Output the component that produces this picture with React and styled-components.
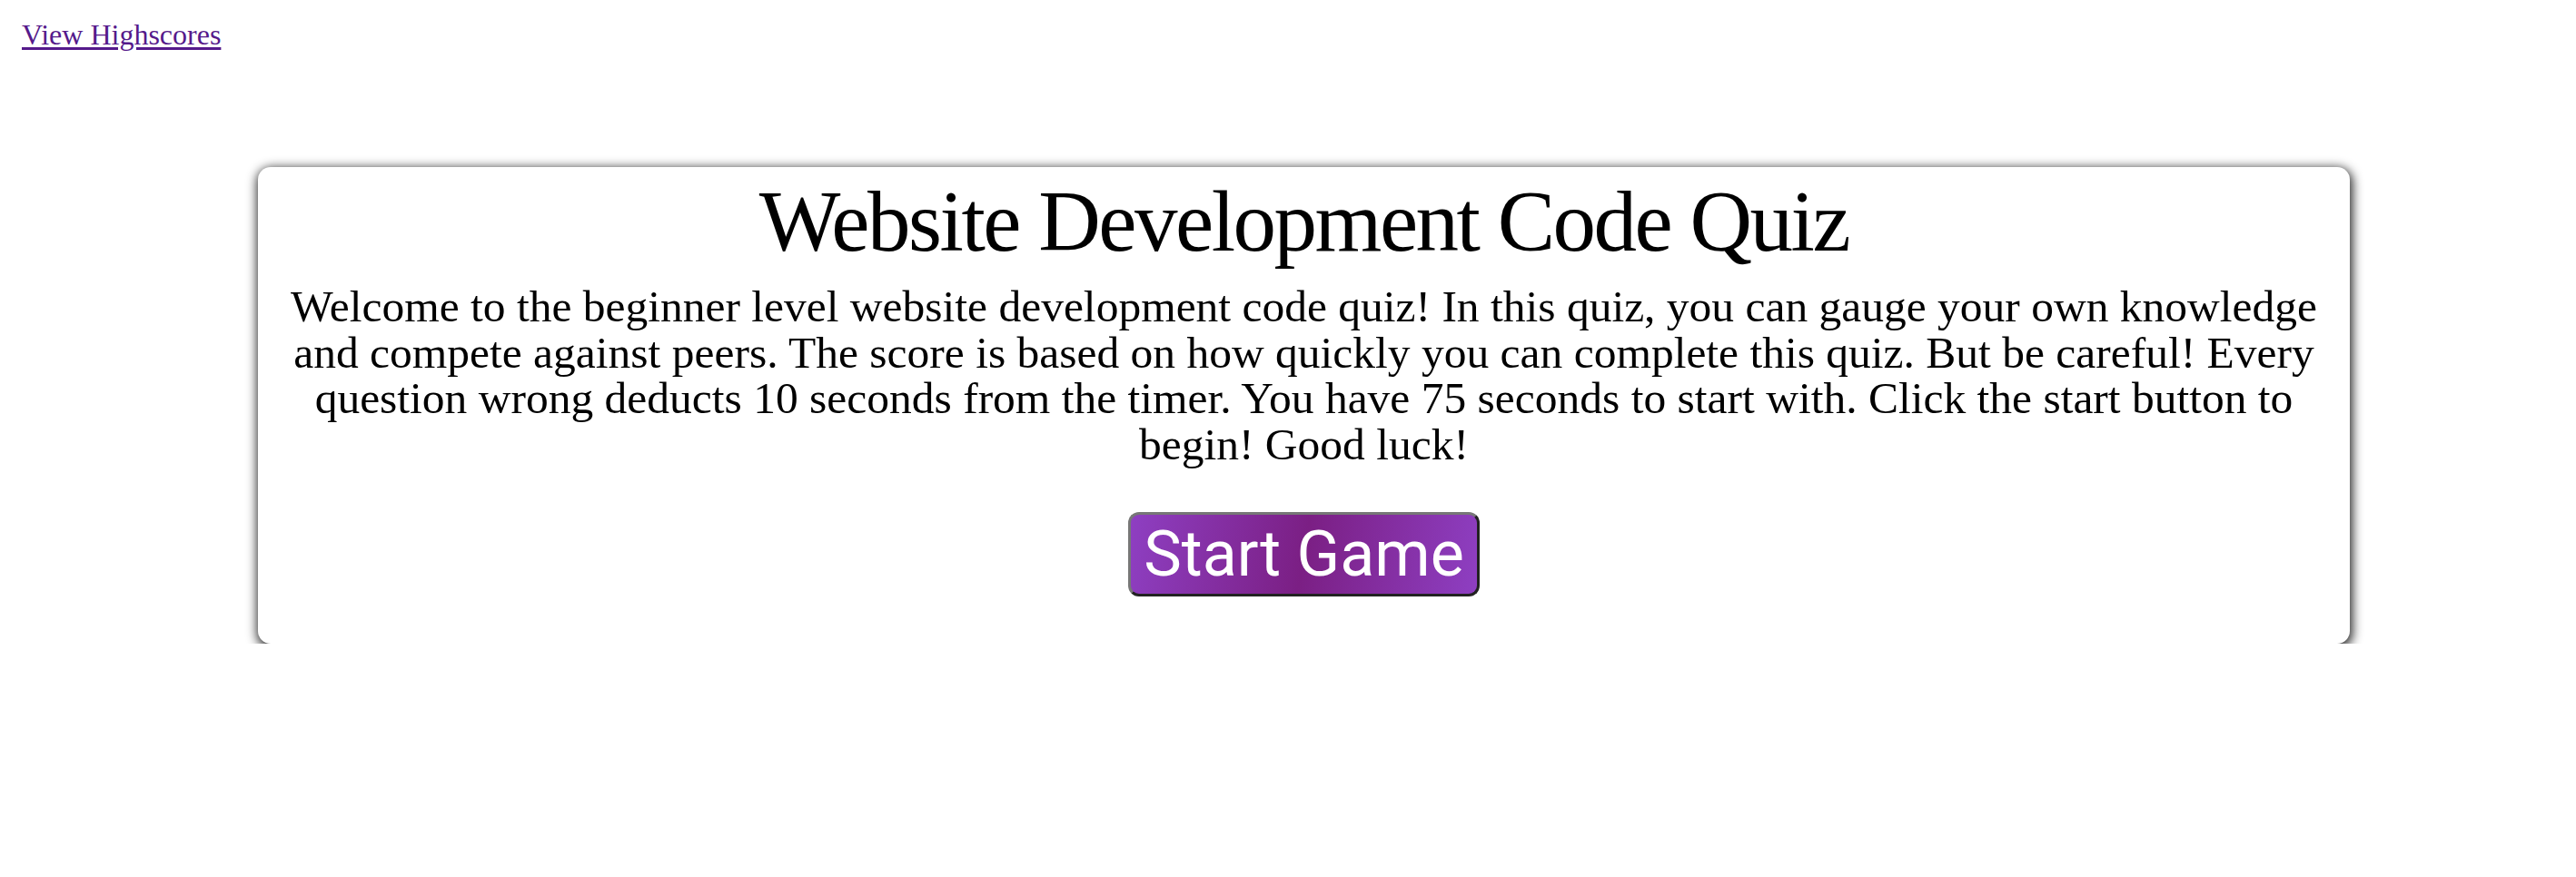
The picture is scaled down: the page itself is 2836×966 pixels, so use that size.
import React from "react";
import styled, { createGlobalStyle } from "styled-components";

const GlobalStyle = createGlobalStyle`
  body {
    margin: 0;
    background: #fff;
    font-family: "Liberation Serif", "Times New Roman", serif;
    color: #000;
  }
`;

const Header = styled.header`
  padding: 20px 0 0 24px;
`;

const HighscoreLink = styled.a`
  font-size: 32px;
  line-height: 36px;
  color: #551a8b;
  text-decoration: underline;
  text-underline-offset: 3px;
  cursor: pointer;
`;

const Card = styled.main`
  margin: 128px 249px 0 284px;
  padding: 7px 16px 52px;
  border-radius: 14px;
  background: #fff;
  box-shadow: 1px 3px 12px 2px rgba(0, 0, 0, 0.85);
  display: flex;
  flex-direction: column;
  align-items: center;
  text-align: center;
`;

const Title = styled.h1`
  margin: 0;
  font-size: 95px;
  font-weight: 400;
  line-height: 106px;
  letter-spacing: -2.5px;
`;

const Intro = styled.p`
  margin: 16px 0 0;
  font-size: 49.5px;
  line-height: 50.6px;
`;

const StartButton = styled.button`
  margin-top: 49px;
  padding: 6px 14px;
  font-family: Roboto, "Noto Sans", sans-serif;
  font-size: 70px;
  line-height: 75px;
  color: #fff;
  border: 3px solid;
  border-color: #777 #222 #222 #777;
  border-radius: 12px;
  background: linear-gradient(100deg, #8e3fc2 0%, #7b1f84 50%, #8e3fc2 100%);
  cursor: pointer;
`;

export default function App() {
  return (
    <>
      <GlobalStyle />
      <Header>
        <HighscoreLink href="#highscores">View Highscores</HighscoreLink>
      </Header>
      <Card>
        <Title>Website Development Code Quiz</Title>
        <Intro>
          Welcome to the beginner level website development code quiz! In this
          quiz, you can gauge your own knowledge and compete against peers. The
          score is based on how quickly you can complete this quiz. But be
          careful! Every question wrong deducts 10 seconds from the timer. You
          have 75 seconds to start with. Click the start button to begin! Good
          luck!
        </Intro>
        <StartButton>Start Game</StartButton>
      </Card>
    </>
  );
}
